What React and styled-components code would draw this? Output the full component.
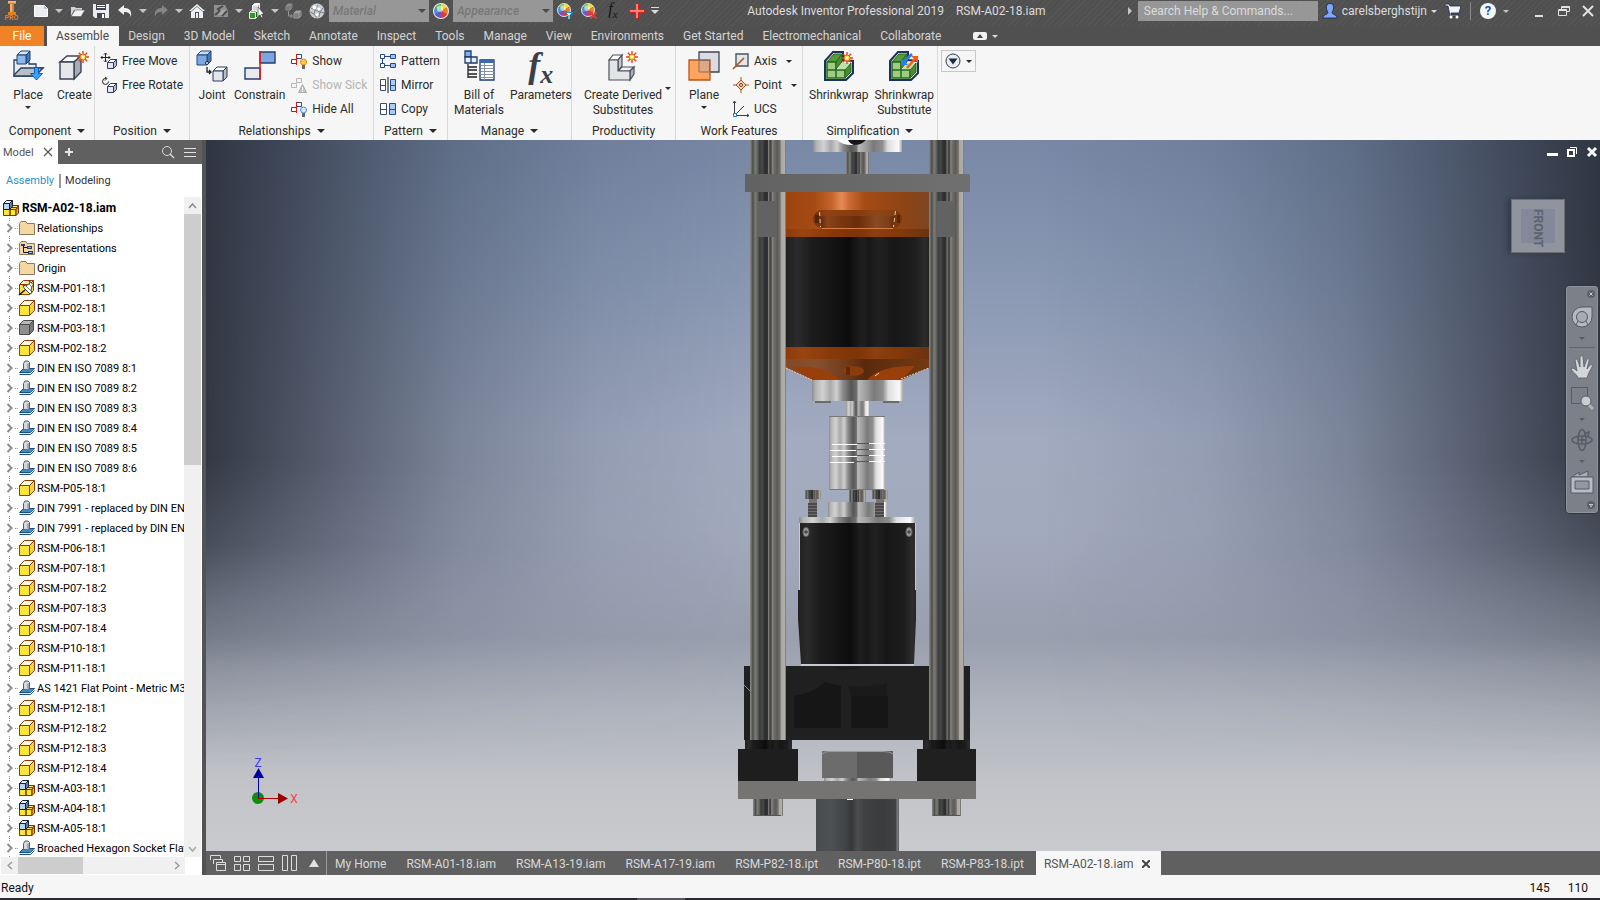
import React from 'react'
import styled, { createGlobalStyle } from 'styled-components'

const treeItems = [
  ['folder', 'Relationships'],
  ['reps', 'Representations'],
  ['folder', 'Origin'],
  ['pinned', 'RSM-P01-18:1'],
  ['part', 'RSM-P02-18:1'],
  ['grayPart', 'RSM-P03-18:1'],
  ['part', 'RSM-P02-18:2'],
  ['bolt', 'DIN EN ISO 7089 8:1'],
  ['bolt', 'DIN EN ISO 7089 8:2'],
  ['bolt', 'DIN EN ISO 7089 8:3'],
  ['bolt', 'DIN EN ISO 7089 8:4'],
  ['bolt', 'DIN EN ISO 7089 8:5'],
  ['bolt', 'DIN EN ISO 7089 8:6'],
  ['part', 'RSM-P05-18:1'],
  ['bolt', 'DIN 7991 - replaced by DIN EN'],
  ['bolt', 'DIN 7991 - replaced by DIN EN'],
  ['part', 'RSM-P06-18:1'],
  ['part', 'RSM-P07-18:1'],
  ['part', 'RSM-P07-18:2'],
  ['part', 'RSM-P07-18:3'],
  ['part', 'RSM-P07-18:4'],
  ['part', 'RSM-P10-18:1'],
  ['part', 'RSM-P11-18:1'],
  ['bolt', 'AS 1421 Flat Point - Metric M3'],
  ['part', 'RSM-P12-18:1'],
  ['part', 'RSM-P12-18:2'],
  ['part', 'RSM-P12-18:3'],
  ['part', 'RSM-P12-18:4'],
  ['assembly', 'RSM-A03-18:1'],
  ['assembly', 'RSM-A04-18:1'],
  ['assembly', 'RSM-A05-18:1'],
  ['bolt', 'Broached Hexagon Socket Flat'],
]

const ribbonTabs = [
  'Assemble', 'Design', '3D Model', 'Sketch', 'Annotate', 'Inspect', 'Tools', 'Manage',
  'View', 'Environments', 'Get Started', 'Electromechanical', 'Collaborate',
]

const documents = [
  'My Home', 'RSM-A01-18.iam', 'RSM-A13-19.iam', 'RSM-A17-19.iam',
  'RSM-P82-18.ipt', 'RSM-P80-18.ipt', 'RSM-P83-18.ipt',
]

/* ---------- icons ---------- */

const Cube = ({ x = 0, y = 0, s = 10, top = '#fff', front = '#e4e6e8', side = '#b9bcc2', line = '#2b3c5e' }) => {
  const d = Math.round(s * 0.3)
  const w = s - d
  return (
    <g stroke={line} strokeLinejoin="round">
      <path fill={top} d={`M${x} ${y + d}l${d} ${-d}h${w}l${-d} ${d}z`} />
      <path fill={side} d={`M${x + w} ${y + d}l${d} ${-d}v${w}l${-d} ${d}z`} />
      <path fill={front} d={`M${x} ${y + d}h${w}v${w}h${-w}z`} />
    </g>
  )
}

const Burst = ({ x, y, r = 6 }) => (
  <g transform={`translate(${x} ${y})`}>
    <path stroke="#e0431b" strokeWidth="1.4" d={`M0 ${-r}V${r}M${-r} 0H${r}M${-r * 0.7} ${-r * 0.7}L${r * 0.7} ${r * 0.7}M${-r * 0.7} ${r * 0.7}L${r * 0.7} ${-r * 0.7}`} />
    <circle r={r * 0.5} fill="#ffe53b" stroke="#e8641b" />
    <circle r={r * 0.2} fill="#fff" />
  </g>
)

const Wheel = ({ cx = 8, cy = 8, r = 7 }) => (
  <g transform={`translate(${cx} ${cy}) scale(${r / 7})`}>
    <path fill="#f3d63b" d="M0 0V-7A7 7 0 0 1 6 -3.5z" />
    <path fill="#ef7b2e" d="M0 0L6 -3.5A7 7 0 0 1 6 3.5z" />
    <path fill="#dd3b3b" d="M0 0L6 3.5A7 7 0 0 1 0 7z" />
    <path fill="#7652c9" d="M0 0V7A7 7 0 0 1 -6 3.5z" />
    <path fill="#4591dc" d="M0 0L-6 3.5A7 7 0 0 1 -6 -3.5z" />
    <path fill="#58bd5a" d="M0 0L-6 -3.5A7 7 0 0 1 0 -7z" />
    <circle cx="-1" cy="-2" r="3" fill="#fff" opacity=".55" />
    <circle r="7" fill="none" stroke="#e8e8e8" />
  </g>
)

const quickIcons = {
  newFile: <><path fill="#e9edf2" stroke="#fff" d="M1.500 2.500h10l3 3v8h-13z" /><path fill="#b9c0ca" d="M11 2v4h4z" /></>,
  open: <><path fill="#d0d3d7" d="M2 13V4h4l1 1h6v2H5z" /><path fill="#eff1f3" stroke="#50555c" strokeWidth=".6" d="M2 13.500L6 7h10l-4 6.500z" /></>,
  save: <><path fill="#e8ebef" d="M0 1h16v14H2l-2-2z" /><path fill="#42464c" d="M3 1h10v6H3zM4 10h8v5H4z" /><path fill="#fff" d="M4 2h8v1H4zM4 4h8v1H4zM9 11h2v4H9z" /></>,
  undo: <path fill="#f0f0f0" d="M1 7l6-5v3c5 0 8 2 7 9-1-4-3-5-7-5v3z" />,
  redo: <path fill="#858585" d="M15 7L9 2v3c-5 0-8 2-7 9 1-4 3-5 7-5v3z" />,
  home: <><path fill="#eef0f2" d="M8 1l8 7h-2v7H2V8H0z" /><path fill="#4a5058" d="M6 9h4v6H6z" /><path fill="#eef0f2" d="M7 10h2v5H7z" /><path fill="none" stroke="#7e858e" d="M2 8.500l6-5 6 5" /></>,
  material: <><path fill="#8f8f8f" d="M1 2h11l3 6v6H1z" /><path fill="none" stroke="#4b4b4b" strokeWidth="2" d="M2 12l5-4-2-2 5-3M9 13l5-5" /><path fill="#a6a6a6" d="M8 7h5l-4 5H5z" /></>,
  select: <><Cube x={3.5} y={0.5} s={7} line="#eee" front="#d5d5d5" side="#aaa" /><Cube x={0.5} y={7.5} s={8} line="#dfeedd" front="#38932e" side="#206818" top="#7ecb73" /><path fill="#fff" stroke="#333" strokeWidth=".6" d="M9 4l6 7-2.500.2 1.500 3-1.500.6-1.500-3L9 13.500z" /></>,
  links: <><Cube x={1} y={1} s={6} line="#8a8a8a" front="#777" side="#606060" top="#999" /><Cube x={9} y={8} s={7} line="#9a9a9a" front="#7d7d7d" side="#666" top="#aaa" /><path fill="none" stroke="#999" d="M3.500 8v5h4M5.500 11l2 2-2 2" /></>,
  sphere: <><circle cx="8" cy="8" r="7.500" fill="#c9ccd0" /><path stroke="#7c8188" fill="none" d="M2 5l4 2-1 4 3 4M6 7l3-5M6 7l5 2 3-4M11 9l-1 5M11 9l4 1M1 9l4 2" /><circle cx="5.500" cy="4.500" r="2" fill="#fff" /><circle cx="10" cy="6" r="1.500" fill="#fff" /><circle cx="8" cy="11.500" r="1.500" fill="#fff" /></>,
  wheel: <Wheel r={7.5} />,
  wheelAdjust: <><Wheel cx={7} cy={7} r={6.500} /><path fill="#eaf8ff" stroke="#1597d3" d="M8.500 9.500h7L12 13z" /><path stroke="#5cc9f5" strokeWidth="2" d="M12 12v4" /></>,
  wheelClear: <><Wheel cx={7} cy={7} r={6.500} /><path stroke="#e23a34" strokeWidth="2" d="M9.500 9.500l6 6m0-6l-6 6" /></>,
  plus: <path fill="#ff7d76" stroke="#d31f17" d="M6.500.5h3v6h6v3h-6v6h-3v-6h-6v-3h6z" />,
}

const treeIcons = {
  folder: <path fill="#f5d7a1" stroke="#8d7a5d" d="M.5 3.500l1.500-2h5l1 2h7.500v11H.5z" />,
  reps: <><path fill="#f5d7a1" stroke="#8d7a5d" d="M.5 3.500l1.500-2h5l1 2h7.500v11H.5z" /><path fill="#273e76" d="M2 4h4v2H2zM8 6h5v3H8zM9 11h5v3H9z" /><path fill="#8fb4ea" d="M9 7h3v1H9zM10 12h3v1h-3z" /><path fill="none" stroke="#111" d="M4.500 6v6.500H9M4.500 7.500H8" /></>,
  part: <Cube x={0.5} y={0.5} s={15} top="#fffbe0" front="#fbe43c" side="#f2d43e" line="#933a0a" />,
  grayPart: <Cube x={0.5} y={0.5} s={14} top="#b8b8b8" front="#8f8f8f" side="#777" line="#4b4b4b" />,
  pinned: <><Cube x={0.5} y={0.5} s={14} top="#fff2a0" front="#fbe43c" side="#f2d43e" line="#933a0a" /><path stroke="#111" strokeWidth="1.500" d="M0 15l6-5" /><path fill="#fff" stroke="#222" strokeWidth=".8" d="M4 5l3 1 4-3-1-2 5 4-2 1-1 4 1 3-2 1-6-6z" /><path stroke="#555" strokeWidth=".8" d="M7 6l5 5M10 4l3 3" /></>,
  bolt: <><path fill="#3a8fc7" stroke="#1e4e7e" d="M.5 12.500l4-4h11l-4 4z" /><path fill="#dff0fb" d="M1 13h10.500l4-4v1.500l-4 4H1z" /><path fill="none" stroke="#1e4e7e" d="M.5 14.500h11l4-4" /><path fill="#d5d8de" stroke="#515c6e" d="M4.500 9.500v-6l1.500-2.500h3l1.500 1.500v5.500l-1.500 2z" /><path fill="#a2a8b2" d="M8 4l2-1v5l-2 1z" /></>,
  assembly: <><Cube x={7.5} y={5.500} s={8} front="#fbd92e" top="#ffef8a" side="#e8a92c" line="#7c3504" /><path fill="#fbe43c" stroke="#7c3504" d="M.5 9.500h6.500v6H.5zM7 9.500h6v6H7z" /><path fill="#e8a92c" stroke="#7c3504" d="M13 9.500l2.500-2.500v6L13 15.500z" /><Cube x={0.500} y={0.500} s={9} front="#b9d2ee" top="#e4effa" side="#5c7ea8" line="#15202f" /></>,
}

const smallIcons = {
  freeMove: <><path fill="none" stroke="#222" d="M4.500 0v9M0 4.500h9M3 1.500l1.500-1.500L6 1.500M3 7.500L4.500 9 6 7.500M1.500 3L0 4.500 1.500 6M7.500 3L9 4.500 7.500 6" /><Cube x={6.500} y={6.500} s={9} /></>,
  freeRotate: <><path fill="none" stroke="#222" d="M5 1.500a3 3 0 1 0 2.500 3M4 0l2 1.500L4 3.500" /><Cube x={6.500} y={6.500} s={9} /></>,
  show: <><path fill="#fff" stroke="#2a4b86" d="M.5 6.500h5v4h-5zM5.500 1.500h5v4h-5z" /><path stroke="#e11" d="M5.500 1v11" /><circle cx="12.500" cy="9" r="3" fill="#ffc845" stroke="#e18a12" /><path fill="#666" d="M11 12h3v4h-3z" /></>,
  showSick: <><path fill="#f4f4f4" stroke="#b7b7b7" d="M.5 6.500h5v4h-5zM5.500 1.500h5v4h-5z" /><path fill="#c4c4c4" stroke="#aaa" d="M11.500 7.500l4 8h-8z" /><path stroke="#fff" d="M11.500 10v3M11.500 14v1" /></>,
  hideAll: <><path fill="#fff" stroke="#2a4b86" d="M.5 6.500h5v4h-5zM5.500 1.500h5v4h-5z" /><path stroke="#e11" d="M5.500 1v11" /><circle cx="12.500" cy="9" r="3" fill="#cde7fb" stroke="#4a8fce" /><path fill="#666" d="M11 12h3v4h-3z" /></>,
  pattern: <g fill="#fff" stroke="#234a8c"><path d="M.5 1.500h4v4h-4zM10.500 1.500h5v4h-5zM.5 10.500h4v4h-4zM10.500 10.500h5v4h-5zM5 3.500h5M2.500 6v4M5 12.500h5" /><path fill="#9cc2ee" d="M11 2h4v3h-4zM11 11h4v3h-4z" stroke="none" /></g>,
  mirror: <><path fill="#fff" stroke="#3a4c68" d="M.5 2.500h5v11h-5zM.5 8.500h5" /><path fill="#a9cdf5" stroke="#234a8c" d="M10.500 2.500h5v11h-5zM10.500 8.500h5" /><path stroke="#111" d="M8 0v16" /></>,
  copy: <><path fill="#fff" stroke="#3a4c68" d="M.5 2.500h6v11h-6zM.5 8.500h6" /><path fill="#a9cdf5" stroke="#234a8c" d="M9.500 2.500h6v11h-6zM9.500 8.500h6" /></>,
  axis: <><path fill="#e4e7eb" stroke="#4a5462" strokeWidth="1.400" d="M3 1h12v12H3z" /><path stroke="#b5501b" strokeWidth="1.600" d="M0 16L11 5" /></>,
  point: <><path stroke="#b5501b" d="M8 0v16M0 8h16" /><path fill="#fbd3ab" stroke="#b5501b" d="M8 3l5 5-5 5-5-5z" /><circle cx="8" cy="8" r="1.500" fill="#fff" stroke="#5c2e12" /></>,
  ucs: <><path stroke="#3a4048" fill="none" d="M1.500 14V0M0 2l1.500-2L3 2M2 14.500h14M14 13l2 1.500-2 1.500M2 14L11 5" /><path fill="#fff" stroke="#1177d1" d="M.5 12.500h3v3h-3z" /></>,
}

const shrinkCube = (
  <>
    <path fill="#eff5ea" stroke="#1b3358" strokeWidth="2" d="M2 11l8-9h10v8l10 1v12l-7 7H2z" />
    <path fill="#5a9a3c" stroke="#256a1c" d="M4 12l7-8h8l-6 8z" />
    <path fill="#9fcb82" stroke="#256a1c" strokeWidth="1.500" d="M4 12h9v8H4zM4 20h9v8H4zM13 20h9v8h-9z" />
    <path fill="#4c8c30" stroke="#256a1c" d="M22 20l6-7v9l-6 6zM13 12l6-8v8l-6 7z" />
    <path fill="#bfe0a6" d="M14 19l5-6h8l-5 6z" />
  </>
)

const bigIcons = {
  place: <><path fill="#e9ecf0" stroke="#2a3f63" strokeWidth="1.300" d="M2 10h15v4h7v4h7l-8 8H2z" /><path fill="#b9bec7" stroke="#2a3f63" strokeWidth="1.300" d="M2 25l7-7h22l-8 8H2z" /><Cube x={5} y={1} s={13} top="#d6e6f9" front="#8db8ea" side="#3f78bd" line="#20406f" /><path fill="#3ba1ff" stroke="#0a5ec2" d="M22.500 17.500h4v6h4l-6 6.500-6-6.500h4z" /></>,
  create: <><path fill="#fff" stroke="#3a4454" strokeWidth="1.400" d="M2 12l7-6h14l-7 6z" /><path fill="#a9adb4" stroke="#3a4454" strokeWidth="1.400" d="M16 12l7-6v16l-7 7z" /><path fill="#e6e7e9" stroke="#3a4454" strokeWidth="1.400" d="M2 12h14v17H2z" /><Burst x={25} y={7} /></>,
  joint: <><Cube x={1} y={1} s={14} top="#c6dcf8" front="#7ba8e2" side="#4577bd" line="#26467c" /><path fill="none" stroke="#222" strokeWidth="1.300" d="M11 17v5h4M13 20l2 2-2 2" /><circle cx="11" cy="13" r="1.500" fill="#fff" stroke="#222" /><Cube x={17} y={17} s={14} /></>,
  constrain: <><path fill="#7ba6e0" stroke="#23406f" strokeWidth="1.400" d="M16 2h15v11H16z" /><path fill="#e9eaec" stroke="#23406f" strokeWidth="1.400" d="M1 18h15v11H1z" /><path stroke="#fa1414" strokeWidth="1.600" d="M16 1v29" /></>,
  bom: <><path fill="#7fb0f0" stroke="#1e3a6a" strokeWidth="1.300" d="M2 1h6v6H2z" /><path fill="#e7eef8" stroke="#1e3a6a" strokeWidth="1.300" d="M2 7h6v6H2zM8 7h6v6H8z" /><path fill="none" stroke="#222" strokeWidth="1.300" d="M5 14v14M5 17h9M5 20h9M5 24h9M5 27h9" /><path fill="#fff" stroke="#1e3a6a" strokeWidth="1.300" d="M17 10h14v20H17z" /><path fill="#3c68ac" d="M17 9h14v4H17z" /><path stroke="#8492a8" d="M18 15.500h13M18 18.500h13M18 21.500h13M18 24.500h13M18 27.500h13M21.500 13v17" /></>,
  derived: <><path fill="#fff" stroke="#4a525e" strokeWidth="1.200" d="M2 10l4-5h9l-4 5z" /><path fill="#c3c6cb" stroke="#4a525e" strokeWidth="1.200" d="M11 10l4-5v11l-4 5z" /><path fill="#f3f3f4" stroke="#4a525e" strokeWidth="1.200" d="M11 21l4-4h12l-4 4z" /><path fill="#aeb2b9" stroke="#4a525e" strokeWidth="1.200" d="M23 21l4-4v7l-4 6z" /><path fill="#e2e4e7" stroke="#4a525e" strokeWidth="1.200" d="M2 10h9v11h12v9H2z" /><Burst x={25} y={7} /></>,
  plane: <><path fill="#d9dde3" stroke="#3e4654" strokeWidth="1.300" d="M11 2h20v20H11z" /><path fill="#ffa35f" stroke="#b4571b" strokeWidth="1.300" d="M1 10h21v20H1z" /><path fill="#dba98a" stroke="#8b6a5a" d="M11 10.500h10.500V22H11z" /></>,
  shrink: <>{shrinkCube}<Burst x={24} y={8} /></>,
  shrinkSub: <>{shrinkCube}<path stroke="#2a7cf0" strokeWidth="2.500" d="M24 4l-8 8" /><path fill="#2a7cf0" d="M13 8v7h7z" /><path stroke="#fb5a14" strokeWidth="2.500" d="M19 18l8-9" /><path fill="#fb5a14" d="M23 6h7v7z" /></>,
}

const Icon = ({ size = 16, children }) => (
  <IconSvg width={size} height={size} viewBox={`0 0 ${size} ${size}`} aria-hidden="true">
    {children}
  </IconSvg>
)

/* ---------- title bar ---------- */

const QuickItem = ({ name, label, caret }) => (
  <>
    <QuickButton aria-label={label}><Icon>{quickIcons[name]}</Icon></QuickButton>
    {caret && <CaretButton aria-label={`${label} options`}><Caret /></CaretButton>}
  </>
)

const TitleBar = () => (
  <TitleRow>
    <AppLogo aria-label="Application menu">
      <svg width="14" height="14" viewBox="0 0 14 14" aria-hidden="true">
        <path fill="#d9822b" d="M3 0h8v3H9v8h2v3H3v-3h2V3H3z" />
        <path fill="#f6b169" d="M3 0h8v2H3zM5 3h2v8H5z" />
      </svg>
      <span>PRO</span>
    </AppLogo>
    <QuickItem name="newFile" label="New" caret />
    <QuickItem name="open" label="Open" />
    <QuickItem name="save" label="Save" />
    <QuickItem name="undo" label="Undo" caret />
    <QuickItem name="redo" label="Redo" caret />
    <QuickItem name="home" label="Home" />
    <QuickItem name="material" label="Update" caret />
    <QuickItem name="select" label="Select" caret />
    <QuickItem name="links" label="Component links" />
    <QuickItem name="sphere" label="Material browser" />
    <SelectWrap><select aria-label="Material"><option>Material</option></select></SelectWrap>
    <QuickItem name="wheel" label="Appearance browser" />
    <SelectWrap><select aria-label="Appearance"><option>Appearance</option></select></SelectWrap>
    <QuickItem name="wheelAdjust" label="Adjust" />
    <QuickItem name="wheelClear" label="Clear" />
    <QuickButton aria-label="Parameters"><SmallFx>f<sub>x</sub></SmallFx></QuickButton>
    <QuickItem name="plus" label="Add" />
    <CaretButton aria-label="Customize">
      <svg width="10" height="8"><path fill="#dcdcdc" d="M1 0h8v1H1zM1 3h8L5 7z" /></svg>
    </CaretButton>
    <WindowTitle>
      <span>Autodesk Inventor Professional 2019</span>
      <span>RSM-A02-18.iam</span>
    </WindowTitle>
    <CaretButton aria-label="Collapse search"><RightCaret /></CaretButton>
    <SearchBox aria-label="Search Help & Commands" placeholder="Search Help & Commands..." />
    <UserButton>
      <Icon>
        <path fill="#7fa6ff" stroke="#14233f" strokeWidth=".8" d="M8 .5c3 0 4 2 3.500 5-.3 2-1 3-1.500 4 0 2 5 2 5.500 5.500H.5C1 11.500 6 11.500 6 9.500 5.500 8.500 4.800 7.500 4.500 5.500 4 2.500 5 .5 8 .5z" />
      </Icon>
      carelsberghstijn
      <Caret $small />
    </UserButton>
    <QuickButton aria-label="Store">
      <Icon><path fill="#f2f4f8" stroke="#1d2748" strokeWidth=".8" d="M0 1h4l1 2h11l-2 7H6v2h8v1H5L3 3H0z" /><circle cx="6" cy="14" r="1.500" fill="#fff" /><circle cx="12" cy="14" r="1.500" fill="#fff" /></Icon>
    </QuickButton>
    <TitleDivider />
    <QuickButton aria-label="Help"><HelpMark>?</HelpMark></QuickButton>
    <CaretButton aria-label="Help options"><Caret $small /></CaretButton>
    <WindowControls>
      <button aria-label="Minimize"><svg width="12" height="12"><path fill="#e2e2e2" d="M1 10h8v2H1z" /></svg></button>
      <button aria-label="Restore"><svg width="12" height="12"><path fill="none" stroke="#e2e2e2" d="M3.500 4V1.500h8v5H9M.5 4.500h8v6h-8zM.5 5.500h8M3.500 2.500h8" /></svg></button>
      <button aria-label="Close"><svg width="12" height="12"><path stroke="#e2e2e2" strokeWidth="2" d="M1 1l10 10M11 1L1 11" /></svg></button>
    </WindowControls>
  </TitleRow>
)

/* ---------- ribbon ---------- */

const Large = ({ icon, lines, caret, fx }) => (
  <LargeButton>
    {fx ? <BigFx>f<sub>x</sub></BigFx> : <Icon size={32}>{bigIcons[icon]}</Icon>}
    {lines.map(line => <span key={line}>{line}</span>)}
    {caret && <Caret $small />}
  </LargeButton>
)

const Small = ({ icon, children, caret, disabled }) => (
  <SmallButton disabled={disabled}>
    <Icon>{smallIcons[icon]}</Icon>
    {children}
    {caret && <Caret $small />}
  </SmallButton>
)

const RibbonPanel = ({ title, menu, wide, children }) => (
  <PanelBox>
    <PanelBody $wide={wide}>{children}</PanelBody>
    <PanelTitle>{title}{menu && <Caret />}</PanelTitle>
  </PanelBox>
)

const Ribbon = () => (
  <RibbonRow>
    <RibbonPanel title="Component" menu wide>
      <Large icon="place" lines={['Place']} caret />
      <Large icon="create" lines={['Create']} />
    </RibbonPanel>
    <RibbonPanel title="Position" menu>
      <SmallStack>
        <Small icon="freeMove">Free Move</Small>
        <Small icon="freeRotate">Free Rotate</Small>
      </SmallStack>
    </RibbonPanel>
    <RibbonPanel title="Relationships" menu>
      <Large icon="joint" lines={['Joint']} />
      <Large icon="constrain" lines={['Constrain']} />
      <SmallStack>
        <Small icon="show">Show</Small>
        <Small icon="showSick" disabled>Show Sick</Small>
        <Small icon="hideAll">Hide All</Small>
      </SmallStack>
    </RibbonPanel>
    <RibbonPanel title="Pattern" menu>
      <SmallStack>
        <Small icon="pattern">Pattern</Small>
        <Small icon="mirror">Mirror</Small>
        <Small icon="copy">Copy</Small>
      </SmallStack>
    </RibbonPanel>
    <RibbonPanel title="Manage" menu>
      <Large icon="bom" lines={['Bill of', 'Materials']} />
      <Large fx lines={['Parameters']} />
    </RibbonPanel>
    <RibbonPanel title="Productivity" wide>
      <Large icon="derived" lines={['Create Derived', 'Substitutes']} />
      <SideCaret aria-label="More substitutes"><Caret $small /></SideCaret>
    </RibbonPanel>
    <RibbonPanel title="Work Features" wide>
      <Large icon="plane" lines={['Plane']} caret />
      <SmallStack>
        <Small icon="axis" caret>Axis</Small>
        <Small icon="point" caret>Point</Small>
        <Small icon="ucs">UCS</Small>
      </SmallStack>
    </RibbonPanel>
    <RibbonPanel title="Simplification" menu>
      <Large icon="shrink" lines={['Shrinkwrap']} />
      <Large icon="shrinkSub" lines={['Shrinkwrap', 'Substitute']} />
    </RibbonPanel>
    <OverflowButton aria-label="Ribbon options">
      <Icon><circle cx="8" cy="8" r="7" fill="#e8edf3" stroke="#333b47" /><path fill="#1f2a3a" d="M3.500 5.500h9L8 11.500z" /></Icon>
      <Caret $small />
    </OverflowButton>
  </RibbonRow>
)

/* ---------- model browser ---------- */

const Browser = () => (
  <Sidebar>
    <BrowserHeader>
      <BrowserTab>
        Model
        <svg width="10" height="10" aria-hidden="true"><path stroke="#555" strokeWidth="1.200" d="M1 1l8 8M9 1L1 9" /></svg>
      </BrowserTab>
      <HeaderButton aria-label="Add browser">
        <svg width="10" height="10"><path stroke="#e6e6e6" strokeWidth="2" d="M5 1v8M1 5h8" /></svg>
      </HeaderButton>
      <HeaderSpace />
      <HeaderButton aria-label="Search browser">
        <svg width="14" height="14"><circle cx="6" cy="6" r="4.500" fill="none" stroke="#d8d8d8" /><path stroke="#d8d8d8" strokeWidth="1.500" d="M9 9l4 4" /></svg>
      </HeaderButton>
      <HeaderButton aria-label="Browser menu">
        <svg width="12" height="12"><path stroke="#e2e2e2" d="M0 2.500h12M0 6.500h12M0 10.500h12" /></svg>
      </HeaderButton>
    </BrowserHeader>
    <ModeRow>
      <ModeButton $active>Assembly</ModeButton>
      <ModeButton>Modeling</ModeButton>
    </ModeRow>
    <TreeArea>
      <Tree>
        <RootRow><Icon>{treeIcons.assembly}</Icon>RSM-A02-18.iam</RootRow>
        {treeItems.map(([icon, name], i) => (
          <TreeRow key={i}>
            <Chevron aria-label={`Expand ${name}`}>
              <svg width="8" height="10"><path fill="none" stroke="#8d8d8d" strokeWidth="2" d="M1.500 1l4 4-4 4" /></svg>
            </Chevron>
            <Icon>{treeIcons[icon]}</Icon>
            <TreeLabel>{name}</TreeLabel>
          </TreeRow>
        ))}
      </Tree>
      <VerticalBar>
        <ScrollButton aria-label="Scroll up"><svg width="9" height="6"><path fill="none" stroke="#8a8a8a" strokeWidth="1.500" d="M1 5l3.500-4L8 5" /></svg></ScrollButton>
        <VerticalThumb />
        <ScrollButton aria-label="Scroll down"><svg width="9" height="6"><path fill="none" stroke="#a5a5a5" strokeWidth="1.500" d="M1 1l3.500 4L8 1" /></svg></ScrollButton>
      </VerticalBar>
    </TreeArea>
    <HorizontalBar>
      <ScrollButton aria-label="Scroll left"><svg width="6" height="9"><path fill="none" stroke="#999" strokeWidth="1.500" d="M5 1L1 4.500 5 8" /></svg></ScrollButton>
      <HorizontalThumb />
      <ScrollButton aria-label="Scroll right"><svg width="6" height="9"><path fill="none" stroke="#999" strokeWidth="1.500" d="M1 1l4 3.500L1 8" /></svg></ScrollButton>
    </HorizontalBar>
  </Sidebar>
)

/* ---------- 3D view ---------- */

const Gradient = ({ id, stops }) => (
  <linearGradient id={id}>
    {stops.map(([offset, color], i) => <stop key={i} offset={offset / 100} stopColor={color} />)}
  </linearGradient>
)

const rodStops = [
  [0, '#8a8a86'], [4, '#6e6e6b'], [8, '#4a4a48'], [14, '#7b7a77'], [20, '#6a6a67'], [26, '#3c3e3e'], [34, '#464848'],
  [42, '#2c2e2e'], [49, '#303232'], [51, '#84827f'], [55, '#4a4a49'], [58, '#3d3d3c'], [62, '#858380'], [68, '#6c6b68'],
  [76, '#5b5955'], [84, '#777571'], [87, '#aaa7a3'], [96, '#b2afab'], [98, '#75736f'], [100, '#a09e9b'],
]
const metalStops = [
  [0, '#8d8d8d'], [4, '#b4b4b4'], [12, '#d2d2d2'], [20, '#a9a9a9'], [27, '#cfcfcf'], [34, '#8a8a8a'], [43, '#565656'],
  [49, '#6f6f6f'], [51, '#b9b9b9'], [60, '#9c9c9c'], [68, '#7a7a7a'], [78, '#8f8f8f'], [84, '#dedede'], [96, '#fafafa'], [100, '#a6a6a6'],
]
const darkStops = [
  [0, '#202020'], [8, '#2b2b2b'], [18, '#1c1c1c'], [30, '#161616'], [44, '#0c0c0c'], [53, '#1f1f1f'], [58, '#171717'],
  [65, '#212121'], [76, '#171717'], [90, '#1d1d1d'], [97, '#2c2c2c'], [100, '#252525'],
]

const Rod = ({ x, w }) => (
  <g>
    <rect x={x} y="140" width={w} height="600" fill="url(#rod)" />
    <rect x={x + 8} y="201" width={w - 17} height="36" fill="#626262" />
    <rect x={x + 3} y="799" width={w - 6} height="17" fill="url(#rod)" />
    <path stroke="#555" d={`M${x + 4} 815.500h27`} />
  </g>
)

const Screw = ({ x }) => (
  <g>
    <rect x={x} y="490" width="16" height="9" fill="url(#rod)" />
    <rect x={x + 4} y="499" width="8" height="4" fill="#77736f" />
    <rect x={x + 3} y="503" width="9" height="14" fill="#4a4a4a" />
    <path stroke="#6d6d6d" d={`M${x + 3} 505.500h9M${x + 3} 508.500h9M${x + 3} 511.500h9M${x + 3} 514.500h9`} />
  </g>
)

const Model = () => (
  <ModelSvg viewBox="206 140 1394 711" preserveAspectRatio="xMidYMid slice" role="img" aria-label="RSM-A02-18 assembly, front view">
    <defs>
      <Gradient id="rod" stops={rodStops} />
      <Gradient id="metal" stops={metalStops} />
      <Gradient id="dark" stops={darkStops} />
      <Gradient id="orange" stops={[[0, '#9c4410'], [20, '#a64a14'], [32, '#c5632c'], [39, '#e58b57'], [44, '#cc6a34'], [55, '#a64c16'], [66, '#9c4915'], [82, '#8e4414'], [100, '#7c4522']]} />
      <Gradient id="band" stops={[[0, '#8b3c0c'], [12, '#9a4410'], [33, '#873808'], [50, '#7d3407'], [62, '#8c3f10'], [80, '#843808'], [100, '#6a3313']]} />
      <Gradient id="slot" stops={[[0, '#5e2a0b'], [10, '#8a431a'], [25, '#7c3810'], [50, '#6a2d08'], [75, '#8a4a22'], [92, '#7a3f1a'], [100, '#5e2a0b']]} />
      <Gradient id="cone" stops={[[0, '#844824'], [22, '#85502f'], [38, '#75401f'], [55, '#5a2a0c'], [75, '#65310f'], [100, '#733a15']]} />
      <Gradient id="tube" stops={[[0, '#494b4d'], [18, '#4e5153'], [35, '#414345'], [43, '#36383a'], [50, '#4b4d4f'], [58, '#3f4143'], [80, '#3a3c3e'], [96, '#404244'], [98, '#7c7e80'], [100, '#595b5d']]} />
      <linearGradient id="plate"><stop offset="0" stopColor="#626262" /><stop offset="1" stopColor="#707070" /></linearGradient>
    </defs>

    <rect x="813" y="140" width="89" height="12" fill="url(#metal)" />
    <path fill="#fff" d="M837 140h29q-4 5-14 5-10 0-15-5z" />
    <path fill="#161616" d="M848 140h18q-4 5-12 5-4-1-6-5z" />
    <rect x="846" y="152" width="23" height="22" fill="url(#rod)" />

    <rect x="744" y="666" width="226" height="74" fill="#202020" />
    <path fill="#161616" d="M794 696q20-3 31-14l16 4v42h-47zM851 695h37v33h-37z" />
    <path fill="#1a1a1a" d="M848 686q24 2 39-3v13h-36zM832 667h30q-15 5-30 0z" />
    <path stroke="#8a8a8a" d="M744 685l6 6" />

    <rect x="786" y="192" width="143" height="45" fill="url(#orange)" />
    <rect x="786" y="229" width="143" height="8" fill="url(#band)" />
    <rect x="813" y="210" width="89" height="18" rx="9" fill="#7a360c" />
    <path fill="#542509" d="M815 215h4v8h-4zM897 215h3v8h-3z" />
    <path fill="url(#slot)" d="M820 210h75l-2 18h-71z" />
    <path fill="#93430f" opacity=".7" d="M820 210h75v6h-75z" />
    <path stroke="#e9c8b3" fill="none" strokeDasharray="4 3" d="M819.500 212l1 15M895.500 211l-2 16" />
    <path stroke="#d67a45" d="M822 228.500h71" />
    <rect x="786" y="237" width="143" height="110" fill="url(#dark)" />
    <rect x="786" y="347" width="143" height="12" fill="url(#band)" />
    <path fill="url(#cone)" d="M786 359h143v9l-28 12h-89l-26-12z" />
    <path fill="#983f0c" d="M792 367q35-2 48 13h-28zM867 380q14-15 48-14l-14 14z" />
    <ellipse cx="853" cy="371" rx="11" ry="5" fill="#8c3b0c" />
    <path fill="#5f2a0a" d="M846 367h4v8h-4z" />
    <path stroke="#ddd" d="M875 376l4-3" />
    <path stroke="#ead1c0" strokeDasharray="2 1" d="M901 379l28-11M786 368l26 12" />

    <rect x="812" y="380" width="91" height="21" fill="url(#metal)" />
    <path fill="#6b6b6b" d="M815 401h16v2h-16zM883 401h16v2h-16z" />
    <rect x="846" y="401" width="23" height="15" fill="url(#metal)" />
    <rect x="849" y="489" width="17" height="14" fill="url(#rod)" />
    <rect x="829" y="416" width="56" height="74" rx="1" fill="url(#metal)" />
    <path stroke="#777" d="M829 416.500h56M830 489.500h54" />
    <path stroke="#fff" d="M832 444.500h25M830 450.500h26M832 456.500h25M830 462.500h24M869 443.500h16M869 449.500h16M869 455.500h16M869 461.500h16" />
    <path stroke="#555" d="M857 443.500h12M857 449.500h12M857 455.500h12M855 461.500h14" />
    <rect x="828" y="502" width="59" height="15" fill="url(#metal)" />
    <Screw x={805} />
    <Screw x={872} />
    <rect x="799" y="517" width="116" height="6" fill="url(#metal)" />
    <path fill="url(#dark)" d="M800 523h115v67h1v29l-2 45H801l-3-45v-29h2z" />
    <path stroke="#d9d9d9" fill="none" d="M799.500 523v67M915.500 523v67" opacity=".7" />
    <g fill="#9b9b9b" stroke="#5c5c5c">
      <ellipse cx="806" cy="532" rx="3" ry="4.500" />
      <ellipse cx="909" cy="532" rx="3" ry="4.500" />
    </g>
    <path stroke="#333" d="M804 532h4M806 530v4M907 532h4M909 530v4" />
    <path stroke="#c5cad6" strokeWidth="2" d="M801 665h113" />

    <Rod x={750} w={36} />
    <Rod x={929} w={35} />
    <rect x="745" y="174" width="225" height="18" fill="url(#plate)" />

    <rect x="745" y="740" width="47" height="9" fill="url(#dark)" />
    <rect x="923" y="740" width="47" height="9" fill="url(#dark)" />
    <rect x="738" y="749" width="60" height="32" fill="#1e1e1e" />
    <rect x="917" y="749" width="59" height="32" fill="#202020" />
    <rect x="822" y="751" width="35" height="27" fill="#6c6c6c" />
    <rect x="857" y="751" width="36" height="27" fill="#595959" />
    <path fill="none" stroke="#9a9a9a" d="M822 754q2-3 8-2.500h52q8 0 11 2.500" />
    <rect x="824" y="778" width="67" height="3" fill="url(#metal)" />
    <rect x="738" y="781" width="238" height="18" fill="#757473" />
    <rect x="816" y="799" width="83" height="52" fill="url(#tube)" />
    <path stroke="#fff" d="M847 799.500h6" />

    <g>
      <circle cx="258" cy="798" r="6" fill="#0b8f0b" />
      <path stroke="#0000b4" d="M258.500 798V778" />
      <path fill="#0000a0" d="M253 778l5.500-10 5.500 10z" />
      <path stroke="#b40000" d="M258 798.500h20" />
      <path fill="#9c0000" d="M278 793l10 5.500-10 5.500z" />
      <AxisText x="258" y="767" fill="#3a3aff">Z</AxisText>
      <AxisText x="294" y="803" fill="#ff3a3a">X</AxisText>
    </g>
  </ModelSvg>
)

const NavBar = () => (
  <NavTools aria-label="Navigation bar">
    <NavDot aria-label="Close navigation bar"><svg width="8" height="8"><circle cx="4" cy="4" r="4" fill="#5a606b" /><path stroke="#c6c9d0" d="M2.500 2.500l3 3m0-3l-3 3" /></svg></NavDot>
    <NavButton aria-label="Wheel">
      <svg width="24" height="24"><path fill="#b5b9c1" stroke="#555b66" d="M12 2h10v10a10 10 0 1 1-10-10z" /><circle cx="12" cy="12" r="5.500" fill="#a6abb5" stroke="#555b66" /><path stroke="#555b66" d="M6 20l2-4M18 20l-2-4" /></svg>
      <NavCaret />
    </NavButton>
    <NavRule />
    <NavButton aria-label="Pan">
      <svg width="24" height="24"><path fill="#d3d5d8" stroke="#555b66" strokeWidth=".8" d="M8 23c-1-4-6-6-7-9 1-2 4 0 6 2L5 5c1-2 2-1 3 1l2 6V2c1-2 3-1 3 0l1 10 3-8c1-1 3 0 2 2l-2 8 3-4c2-1 3 0 2 2-2 4-4 7-5 11z" /></svg>
    </NavButton>
    <NavButton aria-label="Zoom">
      <svg width="24" height="24"><path fill="none" stroke="#565c68" d="M1.500 1.500h16v9M1.500 1.500v16h9" /><path stroke="#aeb2b8" strokeWidth="3" d="M18 18l5 5" /><circle cx="16" cy="15" r="5" fill="#c9cdd0" stroke="#565c68" /></svg>
      <NavCaret />
    </NavButton>
    <NavButton aria-label="Orbit">
      <svg width="24" height="24"><g fill="none" stroke="#565c68" strokeWidth="1.500"><ellipse cx="12" cy="12" rx="10" ry="4" /><ellipse cx="12" cy="12" rx="4" ry="10.500" /><path d="M12 9v6M9 12h6M14 6l5-2-1 5" /></g></svg>
      <NavCaret />
    </NavButton>
    <NavButton aria-label="Look at">
      <svg width="24" height="24"><path fill="#a9adb6" stroke="#555b66" d="M2 7l7-5v3l9-4v6z" /><path fill="#b9bcc4" stroke="#555b66" d="M1 7h22v16H1z" /><path fill="#9299a6" stroke="#555b66" d="M5 11h14v8H5z" /></svg>
    </NavButton>
    <NavDot aria-label="Navigation options"><svg width="8" height="8"><circle cx="4" cy="4" r="4" fill="#5a606b" /><path stroke="#c6c9d0" d="M2 3.500h4" /><path fill="#c6c9d0" d="M2.500 4.500h3L4 6.500z" /></svg></NavDot>
  </NavTools>
)

const DocumentBar = () => (
  <DocBar>
    <DocTool aria-label="Cascade"><Icon><path fill="none" stroke="#ddd" d="M.5 5V.5h10v3M3.500 9V4.500h9v3M6.500 7.500h9v8h-9zM6 9.500h9" /></Icon></DocTool>
    <DocTool aria-label="Tile"><Icon><path fill="none" stroke="#ddd" d="M.5 1.500h6v5h-6zM9.500 1.500h6v5h-6zM.5 9.500h6v6h-6zM9.500 9.500h6v6h-6z" /></Icon></DocTool>
    <DocTool aria-label="Tile horizontally"><Icon><path fill="none" stroke="#ddd" d="M.5 1.500h15v5H.5zM.5 9.500h15v6H.5z" /></Icon></DocTool>
    <DocTool aria-label="Tile vertically"><Icon><path fill="none" stroke="#ddd" d="M.5.5h5v15h-5zM9.500.5h5v15h-5z" /></Icon></DocTool>
    <DocTool aria-label="Document list"><Icon><path fill="#e2e2e2" d="M3 12l5-8 5 8z" /></Icon></DocTool>
    <DocDivider />
    {documents.map(name => <DocTab key={name}>{name}</DocTab>)}
    <DocTab $active>
      RSM-A02-18.iam
      <svg width="8" height="8" aria-hidden="true"><path stroke="#444" strokeWidth="2" d="M0 0l8 8M8 0L0 8" /></svg>
    </DocTab>
  </DocBar>
)

const App = () => (
  <Window>
    <GlobalStyle />
    <TitleBar />
    <TabRow>
      <FileTab>File</FileTab>
      {ribbonTabs.map((tab, i) => <RibbonTab key={tab} $active={i === 0}>{tab}</RibbonTab>)}
      <RibbonToggle aria-label="Minimize ribbon">
        <svg width="14" height="8"><rect width="14" height="8" rx="2" fill="#f0f0f0" /><path fill="#444" d="M4 6l3-4 3 4z" /></svg>
        <Caret $small />
      </RibbonToggle>
    </TabRow>
    <Ribbon />
    <Workspace>
      <Browser />
      <ViewColumn>
        <Viewport>
          <Model />
          <ViewControls>
            <button aria-label="Minimize document"><svg width="12" height="12"><path fill="#fff" d="M1 7h11v3H1z" /></svg></button>
            <button aria-label="Restore document"><svg width="12" height="12"><path fill="none" stroke="#fff" strokeWidth="2" d="M2 4h6v6H2z" /><path fill="none" stroke="#fff" d="M4 1.500h6.500V8" /></svg></button>
            <button aria-label="Close document"><svg width="12" height="12"><path stroke="#fff" strokeWidth="3" d="M2 2l8 8M10 2l-8 8" /></svg></button>
          </ViewControls>
          <ViewCube><span>FRONT</span></ViewCube>
          <NavBar />
        </Viewport>
        <DocumentBar />
      </ViewColumn>
    </Workspace>
    <StatusBar>
      <span>Ready</span>
      <StatusCounts><span>145</span><span>110</span></StatusCounts>
    </StatusBar>
    <DesktopEdge><i /></DesktopEdge>
  </Window>
)
export default App;

const GlobalStyle = createGlobalStyle`
* { box-sizing: border-box; }
body {
  margin: 0;
  font-family: Roboto, "Open Sans", sans-serif;
  font-size: 12px;
  color: #2b2b2b;
  overflow: hidden;
}
button, input, select { font: inherit; color: inherit; }
button {
  margin: 0;
  padding: 0;
  border: none;
  background: none;
  white-space: nowrap;
}
`
const Window = styled.div`
display: flex;
flex-direction: column;
height: 100vh;
background: #f6f6f6;
`
const IconSvg = styled.svg`
display: block;
flex: none;
overflow: visible;
`
const Caret = styled.i`
flex: none;
border: ${p => (p.$small ? 3 : 4)}px solid transparent;
border-top-color: currentColor;
border-bottom: none;
`
const RightCaret = styled.i`
border: 4px solid transparent;
border-left-color: currentColor;
border-right: none;
`

const TitleRow = styled.header`
display: flex;
align-items: center;
height: 26px;
flex: none;
padding-bottom: 4px;
color: #dcdcdc;
background: #505050 repeating-linear-gradient(135deg, #505050 0 3px, #565656 3px 4px);
`
const AppLogo = styled.button`
display: flex;
flex-direction: column;
align-items: center;
width: 23px;
margin-right: 6px;
font-size: 7px;
line-height: 7px;
font-weight: 700;
color: #d9822b;
`
const QuickButton = styled.button`
display: flex;
align-items: center;
justify-content: center;
flex: none;
width: 24px;
height: 22px;
`
const CaretButton = styled(QuickButton)`
width: 12px;
color: #c4c4c4;
`
const SelectWrap = styled.div`
position: relative;
flex: none;
width: 100px;
height: 22px;
background: #979797;
color: #777;
select {
  width: 100%;
  height: 100%;
  padding: 0 4px;
  border: none;
  background: none;
  appearance: none;
  font-style: italic;
  font-weight: 500;
}
&::after {
  content: '';
  position: absolute;
  right: 3px;
  top: 9px;
  border: 4px solid transparent;
  border-top-color: #4c4c4c;
  border-bottom: none;
}
`
const SmallFx = styled.span`
font: italic 16px/16px "Liberation Serif", serif;
color: #151515;
sub { font-size: 11px; line-height: 1; }
`
const WindowTitle = styled.div`
display: flex;
flex: 1;
justify-content: center;
gap: 12px;
padding-left: 8px;
white-space: nowrap;
`
const SearchBox = styled.input`
flex: none;
width: 180px;
height: 20px;
margin-left: 2px;
padding: 0 6px;
border: none;
background: #979797;
&::placeholder { color: #dcdcdc; opacity: 1; }
`
const UserButton = styled.button`
display: flex;
align-items: center;
gap: 4px;
padding: 0 4px;
color: #dcdcdc;
`
const TitleDivider = styled.i`
width: 1px;
height: 18px;
margin: 0 5px;
background: #8a8a8a;
`
const HelpMark = styled.span`
width: 16px;
height: 16px;
border-radius: 8px;
background: #f4f6fa;
color: #2453b5;
font-weight: 700;
font-size: 13px;
line-height: 16px;
text-align: center;
`
const WindowControls = styled.div`
display: flex;
gap: 12px;
margin: 0 6px 0 22px;
button { display: flex; }
`

const TabRow = styled.nav`
display: flex;
flex: none;
height: 20px;
background: #505050;
`
const RibbonTab = styled.button`
padding: 0 10px 0 9px;
color: ${p => (p.$active ? '#4a4a4a' : '#d4d4d4')};
background: ${p => (p.$active ? '#f6f6f6' : 'none')};
`
const FileTab = styled.button`
width: 44px;
margin-right: 3px;
color: #fff;
background: #f08326;
`
const RibbonToggle = styled.button`
display: flex;
align-items: center;
gap: 5px;
margin-left: 22px;
color: #dcdcdc;
`

const RibbonRow = styled.section`
display: grid;
grid-template-columns: 95px 95px 184px 74px 124px 104px 127px 135px auto;
justify-content: start;
flex: none;
height: 94px;
background: #f6f6f6;
`
const PanelBox = styled.div`
display: flex;
flex-direction: column;
border-right: 1px solid #d9d9d9;
`
const PanelBody = styled.div`
display: flex;
flex: 1;
gap: ${p => (p.$wide ? 13 : 6)}px;
padding: 4px 0 0 ${p => (p.$wide ? 12 : 6)}px;
`
const PanelTitle = styled.div`
display: flex;
align-items: center;
justify-content: center;
gap: 6px;
height: 18px;
`
const LargeButton = styled.button`
display: flex;
flex-direction: column;
align-items: center;
line-height: 15px;
svg { margin-bottom: 6px; }
i { margin-top: 3px; }
`
const BigFx = styled.span`
height: 38px;
font: italic bold 36px/30px "Liberation Serif", serif;
color: #3a4048;
sub { font-size: 26px; line-height: 1; vertical-align: -6px; }
`
const SmallStack = styled.div`
display: flex;
flex-direction: column;
align-items: flex-start;
margin-top: -1px;
`
const SmallButton = styled.button`
display: flex;
align-items: center;
gap: 5px;
height: 24px;
color: ${p => (p.disabled ? '#b4b4b4' : 'inherit')};
i { margin-left: 4px; }
`
const SideCaret = styled.button`
align-self: flex-end;
margin: 0 0 18px -10px;
`
const OverflowButton = styled.button`
display: flex;
align-items: center;
gap: 5px;
height: 22px;
margin: 4px 3px;
padding: 0 3px;
border: 1px solid #c8c8c8;
`

const Workspace = styled.main`
display: flex;
flex: 1;
min-height: 0;
`
const Sidebar = styled.aside`
display: flex;
flex-direction: column;
flex: none;
width: 206px;
background: #fff;
border-right: 4px solid #535353;
`
const BrowserHeader = styled.div`
display: flex;
flex: none;
height: 24px;
padding-right: 1px;
background: #606060;
`
const BrowserTab = styled.button`
display: flex;
align-items: center;
gap: 9px;
width: 58px;
padding-left: 3px;
font-size: 11px;
color: #555;
background: #fff;
`
const HeaderButton = styled.button`
display: flex;
align-items: center;
justify-content: center;
width: 22px;
`
const HeaderSpace = styled.div`
flex: 1;
`
const ModeRow = styled.div`
display: flex;
align-items: center;
flex: none;
height: 33px;
padding-left: 6px;
`
const ModeButton = styled.button`
font-size: 11px;
line-height: 14px;
color: ${p => (p.$active ? '#1b93cf' : '#333')};
& + & {
  margin-left: 5px;
  padding-left: 4px;
  border-left: 2px solid #999;
}
`
const TreeArea = styled.div`
display: flex;
flex: 1;
min-height: 0;
`
const Tree = styled.ul`
flex: 1;
min-width: 0;
margin: 0;
padding: 1px 0 0;
overflow: hidden;
list-style: none;
font-size: 11px;
color: #000;
`
const RootRow = styled.li`
display: flex;
align-items: center;
gap: 3px;
height: 20px;
padding-left: 3px;
font-size: 12px;
font-weight: 700;
`
const TreeRow = styled.li`
display: flex;
align-items: center;
height: 20px;
padding-left: 5px;
background: repeating-linear-gradient(#888 0 1px, #fff 1px 2px) 9px 0 / 1px 100% no-repeat, repeating-linear-gradient(90deg, #999 0 1px, #fff 1px 2px) 15px 10px / 4px 1px no-repeat;
`
const Chevron = styled.button`
display: flex;
flex: none;
justify-content: center;
width: 9px;
margin-right: 5px;
padding: 2px 0;
background: #fff;
`
const TreeLabel = styled.span`
margin-left: 2px;
white-space: nowrap;
`
const VerticalBar = styled.div`
display: flex;
flex-direction: column;
width: 17px;
margin-right: 1px;
background: #f0f0f0;
`
const ScrollButton = styled.button`
display: flex;
align-items: center;
justify-content: center;
flex: none;
width: 17px;
height: 17px;
`
const VerticalThumb = styled.div`
flex: 0 0 38%;
margin-bottom: auto;
background: #cdcdcd;
`
const HorizontalBar = styled.div`
display: flex;
flex: none;
height: 17px;
margin: 0 17px 1px 1px;
background: #f0f0f0;
`
const HorizontalThumb = styled.div`
flex: 0 0 65px;
margin-right: auto;
background: #cdcdcd;
`

const ViewColumn = styled.div`
display: flex;
flex-direction: column;
flex: 1;
min-width: 0;
`
const Viewport = styled.div`
position: relative;
flex: 1;
min-height: 0;
overflow: hidden;
background: linear-gradient(#7888a5 0, #8a98b3 20%, #a2abc0 42%, #a2aabd 55%, #999fae 70%, #b0b4be 80%, #c4c5c9 92%, #c9cacd 100%);
&::before {
  content: '';
  position: absolute;
  inset: 0;
  background: linear-gradient(90deg, rgba(42, 47, 58, .93) 0, rgba(44, 52, 66, .64) 9%, rgba(52, 64, 84, .36) 18%, rgba(60, 75, 100, .14) 28%, transparent 40%, transparent 60%, rgba(60, 75, 100, .14) 72%, rgba(52, 64, 84, .36) 82%, rgba(44, 52, 66, .64) 91%, rgba(42, 47, 58, .93) 100%);
  mask-image: linear-gradient(#000 0, #000 45%, rgba(0, 0, 0, .8) 57%, rgba(0, 0, 0, .5) 65%, rgba(0, 0, 0, .2) 74%, transparent 88%);
}
`
const ModelSvg = styled.svg`
position: absolute;
inset: 0;
width: 100%;
height: 100%;
`
const AxisText = styled.text`
font-size: 12px;
text-anchor: middle;
`
const ViewControls = styled.div`
position: absolute;
top: 6px;
right: 2px;
display: flex;
gap: 8px;
button { display: flex; }
`
const ViewCube = styled.button`
position: absolute;
top: 59px;
right: 35px;
width: 54px;
height: 54px;
padding: 9px;
color: #5c6370;
background: #8f949e;
border: 1px solid #6f6f70;
box-shadow: -4px 0 5px rgba(30, 35, 48, .4);
span {
  display: block;
  height: 34px;
  line-height: 34px;
  writing-mode: vertical-rl;
  background: #838998;
  font-weight: 700;
}
`
const NavTools = styled.nav`
position: absolute;
top: 145px;
right: 1px;
display: flex;
flex-direction: column;
align-items: center;
gap: 7px;
width: 34px;
padding: 4px 0;
border: 1px solid #30363f;
border-radius: 4px;
background: #7b8089;
box-shadow: inset 0 0 0 1px #8f949c;
`
const NavDot = styled.button`
display: flex;
align-self: flex-end;
margin-right: 3px;
`
const NavButton = styled.button`
display: flex;
flex-direction: column;
align-items: center;
gap: 8px;
`
const NavCaret = styled(Caret)`
border-width: 3px;
border-bottom: none;
color: #565c68;
`
const NavRule = styled.i`
width: 26px;
height: 1px;
background: #5f656f;
`

const DocBar = styled.nav`
display: flex;
flex: none;
height: 24px;
background: #606060;
`
const DocTool = styled.button`
display: flex;
align-items: center;
justify-content: center;
width: 24px;
`
const DocDivider = styled.i`
width: 1px;
background: #999;
`
const DocTab = styled.button`
display: flex;
align-items: center;
gap: 8px;
padding: 1px ${p => (p.$active ? 11 : 12)}px 0 8px;
color: ${p => (p.$active ? '#555' : '#d8d8d8')};
background: ${p => (p.$active ? '#f6f6f6' : 'none')};
`
const StatusBar = styled.footer`
display: flex;
align-items: center;
justify-content: space-between;
flex: none;
height: 23px;
padding: 2px 12px 0 1px;
color: #111;
`
const StatusCounts = styled.div`
display: flex;
gap: 18px;
`
const DesktopEdge = styled.div`
flex: none;
height: 2px;
padding-left: 637px;
background: #2b2b2f;
i { display: block; width: 48px; height: 2px; background: #58585c; }
`
